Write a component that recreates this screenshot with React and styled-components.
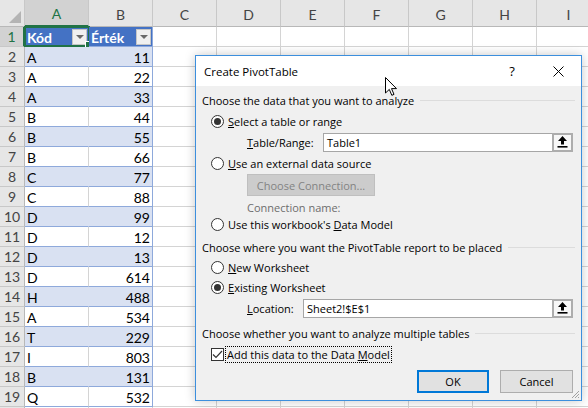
import React from "react";
import styled, { createGlobalStyle } from "styled-components";

const GlobalStyle = createGlobalStyle`
  html, body {
    margin: 0;
    padding: 0;
    background: #ffffff;
  }
  body {
    font-family: Lato, "Liberation Sans", sans-serif;
  }
`;

const COLS = ["A", "B", "C", "D", "E", "F", "G", "H", "I"];

const DATA = [
  ["A", 11], ["A", 22], ["A", 33], ["B", 44], ["B", 55], ["B", 66],
  ["C", 77], ["C", 88], ["D", 99], ["D", 12], ["D", 13], ["D", 614],
  ["H", 488], ["A", 534], ["T", 229], ["I", 803], ["B", 131], ["Q", 532],
];

const UI_FONT = `"Open Sans", "Noto Sans", "Liberation Sans", sans-serif`;

/* ---------- worksheet ---------- */

const Page = styled.div`
  position: relative;
  width: 588px;
  height: 408px;
  overflow: hidden;
`;

const Sheet = styled.div`
  display: grid;
  grid-template-columns: 25px repeat(9, 64px);
  grid-template-rows: 27px;
  grid-auto-rows: 20px;
  font-size: 14px;
  color: #000;
`;

const Corner = styled.div`
  position: relative;
  background: #e6e6e6;
  border-right: 1px solid #c8c8c8;
  border-bottom: 1px solid #b8b8b8;
  box-sizing: border-box;

  &::after {
    content: "";
    position: absolute;
    right: 3px;
    bottom: 3px;
    border-style: solid;
    border-width: 0 0 12px 12px;
    border-color: transparent transparent #b4b4b4 transparent;
  }
`;

const ColHead = styled.div`
  display: flex;
  align-items: center;
  justify-content: center;
  padding-top: 2px;
  box-sizing: border-box;
  background: ${(p) => (p.$active ? "#d2d2d2" : "#e6e6e6")};
  color: ${(p) => (p.$active ? "#217346" : "#444")};
  border-right: 1px solid #c8c8c8;
  border-bottom: ${(p) => (p.$active ? "2px solid #217346" : "1px solid #b8b8b8")};
  font-size: 14px;
`;

const RowHead = styled.div`
  display: flex;
  align-items: center;
  justify-content: center;
  box-sizing: border-box;
  background: ${(p) => (p.$active ? "#d2d2d2" : "#e6e6e6")};
  color: ${(p) => (p.$active ? "#217346" : "#444")};
  border-right: ${(p) => (p.$active ? "2px solid #217346" : "1px solid #b8b8b8")};
  border-bottom: 1px solid #c8c8c8;
  font-size: 14px;
`;

const BAND = {
  plain: { bg: "#ffffff", bottom: "#d4d4d4" },
  head: { bg: "#4472c4", bottom: "#8ea9db" },
  blue: { bg: "#d9e1f2", bottom: "#8ea9db" },
  white: { bg: "#ffffff", bottom: "#8ea9db" },
};

const Cell = styled.div`
  position: relative;
  display: flex;
  align-items: center;
  justify-content: ${(p) => (p.$right ? "flex-end" : "space-between")};
  box-sizing: border-box;
  padding: 1px 2px 0 2px;
  background: ${(p) => BAND[p.$band].bg};
  border-bottom: 1px solid ${(p) => BAND[p.$band].bottom};
  border-right: 1px solid ${(p) => p.$edge || "#d4d4d4"};
  color: ${(p) => (p.$band === "head" ? "#fff" : "#000")};
  font-weight: ${(p) => (p.$band === "head" ? 700 : 400)};
  white-space: nowrap;
`;

const FilterBtn = styled.span`
  display: flex;
  align-items: center;
  justify-content: center;
  width: 15px;
  height: 16px;
  margin-right: -1px;
  box-sizing: border-box;
  background: #f0f0f0;
  border: 1px solid #c6c6c6;

  &::after {
    content: "";
    border-style: solid;
    border-width: 4px 4px 0 4px;
    border-color: #6a6a6a transparent transparent transparent;
  }
`;

const Selection = styled.div`
  position: absolute;
  left: -1px;
  top: -1px;
  right: -2px;
  bottom: -1px;
  border: 2px solid #217346;
  pointer-events: none;
`;

const FillHandle = styled.div`
  position: absolute;
  right: -4px;
  bottom: -3px;
  width: 5px;
  height: 5px;
  background: #217346;
  border: 1px solid #fff;
`;

/* ---------- dialog ---------- */

const Dialog = styled.div`
  position: absolute;
  left: 195px;
  top: 55px;
  width: 387px;
  height: 346px;
  box-sizing: border-box;
  display: flex;
  flex-direction: column;
  border: 1px solid #3c8fdd;
  background: #f0f0f0;
  box-shadow: 0 0 10px rgba(0, 0, 0, 0.22);
  font-family: ${UI_FONT};
  font-size: 11px;
  color: #000;
`;

const TitleBar = styled.div`
  display: flex;
  align-items: center;
  height: 30px;
  background: #ffffff;
  padding-left: 8px;
`;

const Title = styled.div`
  flex: 1;
  font-size: 11.5px;
`;

const TitleBtn = styled.div`
  display: flex;
  align-items: center;
  justify-content: center;
  width: 46px;
  height: 30px;
  font-size: 13px;
`;

const Body = styled.div`
  position: relative;
  flex: 1;
  display: flex;
  flex-direction: column;
  padding: 6px 8px 0 6px;
`;

const Row = styled.div`
  display: flex;
  align-items: center;
  height: ${(p) => p.$h || 16}px;
  margin-top: ${(p) => p.$mt || 0}px;
  padding-left: ${(p) => p.$indent || 0}px;
  gap: ${(p) => p.$gap || 0}px;
  justify-content: ${(p) => p.$justify || "flex-start"};
  white-space: nowrap;
`;

const Section = styled.div`
  display: flex;
  align-items: center;
  flex: 1;
  margin-right: -2px;

  &::after {
    content: "";
    flex: 1;
    height: 1px;
    margin-left: 6px;
    background: #dcdcdc;
  }
`;

const Radio = styled.span`
  display: flex;
  align-items: center;
  justify-content: center;
  width: 13px;
  height: 13px;
  box-sizing: border-box;
  margin-right: 4px;
  border: 1px solid #333;
  border-radius: 50%;
  background: #fff;

  &::after {
    content: "";
    display: ${(p) => (p.$checked ? "block" : "none")};
    width: 7px;
    height: 7px;
    border-radius: 50%;
    background: #333;
  }
`;

const Check = styled.span`
  display: flex;
  align-items: center;
  justify-content: center;
  width: 13px;
  height: 13px;
  box-sizing: border-box;
  margin-right: 2px;
  border: 1px solid #333;
  background: #fff;
`;

const FocusLabel = styled.span`
  padding: 0 1px;
  outline: 1px dotted #000;
  line-height: 15px;
`;

const FieldLabel = styled.span`
  width: ${(p) => p.$w}px;
  flex: none;
`;

const Input = styled.div`
  flex: 1;
  display: flex;
  align-items: center;
  height: 19px;
  box-sizing: border-box;
  border: 1px solid #a6a6a6;
  background: #fff;
`;

const InputText = styled.span`
  flex: 1;
  padding-left: 3px;
`;

const PickBtn = styled.span`
  display: flex;
  align-items: center;
  justify-content: center;
  align-self: stretch;
  width: 21px;
  margin: -1px -1px -1px 0;
  box-sizing: border-box;
  border: 2px solid #adadad;
  background: #f7f7f7;
`;

const GhostBtn = styled.div`
  display: flex;
  align-items: center;
  justify-content: center;
  width: 128px;
  height: 22px;
  box-sizing: border-box;
  border: 1px solid #bfbfbf;
  background: #cccccc;
  color: #838383;
`;

const Muted = styled.span`
  color: #6d6d6d;
`;

const Button = styled.div`
  display: flex;
  align-items: center;
  justify-content: center;
  width: ${(p) => p.$w}px;
  height: 23px;
  box-sizing: border-box;
  background: #e1e1e1;
  border: ${(p) => (p.$primary ? "2px solid #0078d7" : "1px solid #adadad")};
`;

const Grip = styled.svg`
  position: absolute;
  right: 1px;
  bottom: 1px;
`;

const Cursor = styled.svg`
  position: absolute;
  left: 385px;
  top: 77px;
`;

const UpArrow = () => (
  <svg width="11" height="12" viewBox="0 0 11 12">
    <path d="M5.5 0 L10 5 L7 5 L7 8.5 L4 8.5 L4 5 L1 5 Z" fill="#000" />
    <rect x="0.5" y="10" width="10" height="1.6" fill="#000" />
  </svg>
);

function Worksheet() {
  const cells = [];
  cells.push(<Corner key="corner" />);
  COLS.forEach((c, i) => (
    cells.push(<ColHead key={"h" + c} $active={i === 0}>{c}</ColHead>)
  ));

  // row 20 only peeks in by a pixel, so its number is left out
  for (let r = 1; r <= 20; r++) {
    cells.push(<RowHead key={"r" + r} $active={r === 1}>{r < 20 ? r : ""}</RowHead>);
    COLS.forEach((c, ci) => {
      const key = c + r;
      if (r === 1 && ci < 2) {
        cells.push(
          <Cell key={key} $band="head" $edge={ci === 0 ? "#4472c4" : "#8ea9db"}>
            <span>{ci === 0 ? "Kód" : "Érték"}</span>
            <FilterBtn />
            {ci === 0 && (
              <Selection>
                <FillHandle />
              </Selection>
            )}
          </Cell>
        );
        return;
      }
      const row = DATA[r - 2];
      if (row && ci < 2) {
        const blue = (r - 2) % 2 === 0;
        const band = blue ? "blue" : "white";
        const edge = ci === 1 ? "#8ea9db" : blue ? "#d9e1f2" : "#d4d4d4";
        cells.push(
          <Cell key={key} $band={band} $edge={edge} $right={ci === 1}>
            {row[ci]}
          </Cell>
        );
        return;
      }
      cells.push(<Cell key={key} $band="plain" />);
    });
  }
  return <Sheet>{cells}</Sheet>;
}

function PivotDialog() {
  return (
    <Dialog>
      <TitleBar>
        <Title>Create PivotTable</Title>
        <TitleBtn>?</TitleBtn>
        <TitleBtn>
          <svg width="11" height="11" viewBox="0 0 11 11">
            <path d="M0.5 0.5 L10.5 10.5 M10.5 0.5 L0.5 10.5" stroke="#000" strokeWidth="1" />
          </svg>
        </TitleBtn>
      </TitleBar>
      <Body>
        <Row>
          <Section>Choose the data that you want to analyze</Section>
        </Row>
        <Row $mt={5} $indent={9}>
          <Radio $checked />
          <span><u>S</u>elect a table or range</span>
        </Row>
        <Row $mt={3} $h={20} $indent={45}>
          <FieldLabel $w={76}><u>T</u>able/Range:</FieldLabel>
          <Input>
            <InputText>Table1</InputText>
            <PickBtn><UpArrow /></PickBtn>
          </Input>
        </Row>
        <Row $mt={3} $indent={9}>
          <Radio />
          <span><u>U</u>se an external data source</span>
        </Row>
        <Row $mt={3} $h={22} $indent={45}>
          <GhostBtn>Choose Connection...</GhostBtn>
        </Row>
        <Row $mt={3} $indent={45}>
          <Muted>Connection name:</Muted>
        </Row>
        <Row $mt={1} $indent={9}>
          <Radio />
          <span>Use this workbook's <u>D</u>ata Model</span>
        </Row>
        <Row $mt={7}>
          <Section>Choose where you want the PivotTable report to be placed</Section>
        </Row>
        <Row $mt={4} $indent={9}>
          <Radio />
          <span><u>N</u>ew Worksheet</span>
        </Row>
        <Row $mt={4} $indent={9}>
          <Radio $checked />
          <span><u>E</u>xisting Worksheet</span>
        </Row>
        <Row $mt={3} $h={20} $indent={45}>
          <FieldLabel $w={56}><u>L</u>ocation:</FieldLabel>
          <Input>
            <InputText>Sheet2!$E$1</InputText>
            <PickBtn><UpArrow /></PickBtn>
          </Input>
        </Row>
        <Row $mt={7}>
          <Section>Choose whether you want to analyze multiple tables</Section>
        </Row>
        <Row $mt={5} $indent={9}>
          <Check>
            <svg width="11" height="9" viewBox="0 0 11 9">
              <path d="M1 4.5 L4 7.5 L10 1" fill="none" stroke="#333" strokeWidth="1.2" />
            </svg>
          </Check>
          <FocusLabel>Add this data to the Data <u>M</u>odel</FocusLabel>
        </Row>
        <Row $mt={8} $h={23} $gap={11} $justify="flex-end">
          <Button $w={72} $primary>OK</Button>
          <Button $w={73}>Cancel</Button>
        </Row>
        <Grip width="10" height="10" viewBox="0 0 10 10">
          <path d="M9 2 L2 9 M9 5 L5 9 M9 8 L8 9" stroke="#a0a0a0" strokeWidth="1" />
        </Grip>
      </Body>
    </Dialog>
  );
}

export default function App() {
  return (
    <Page>
      <GlobalStyle />
      <Worksheet />
      <PivotDialog />
      <Cursor width="13" height="20" viewBox="0 0 13 20">
        <path
          d="M0.5 0.5 L0.5 16 L4.3 12.4 L6.8 18.3 L9 17.4 L6.5 11.6 L11.5 11.6 Z"
          fill="#fff"
          stroke="#000"
          strokeWidth="1"
          strokeLinejoin="round"
        />
      </Cursor>
    </Page>
  );
}
